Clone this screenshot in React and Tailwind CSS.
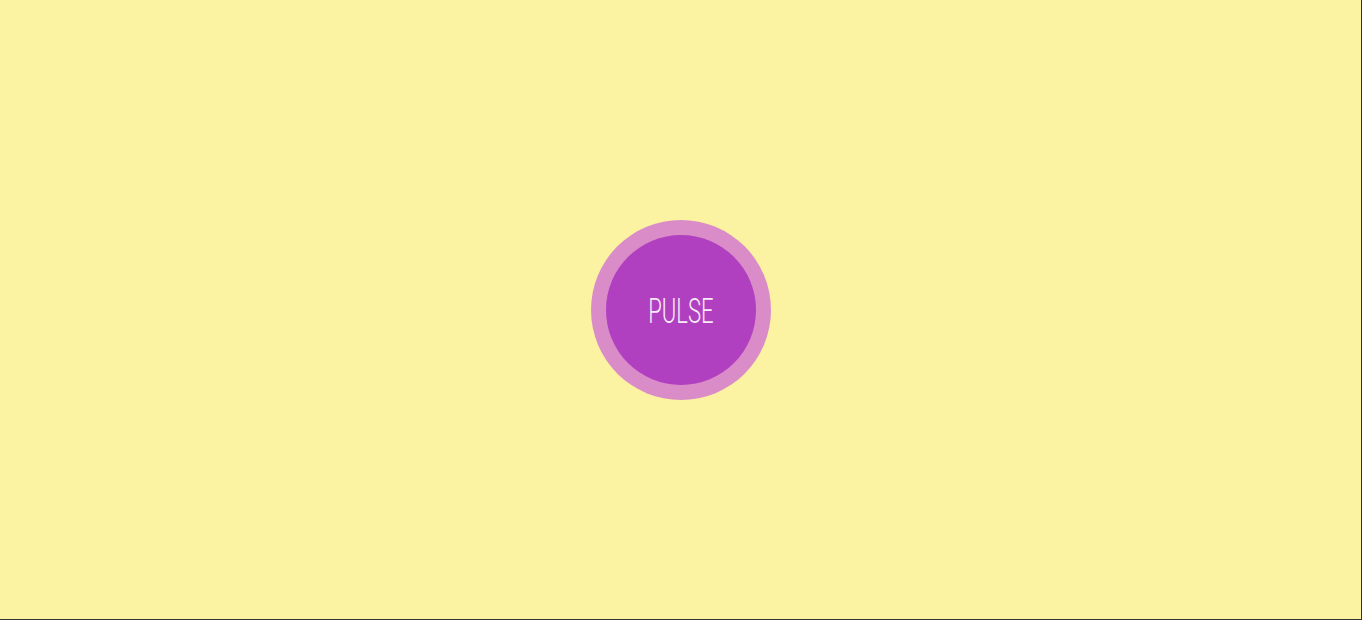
export default function App() {
  return (
    <main className="flex h-[620px] w-full items-center justify-center border-r border-b border-[#333] bg-[#fbf3a1]">
      <div className="flex h-[180px] w-[180px] items-center justify-center rounded-full bg-[#da8cc8]">
        <div className="flex h-[150px] w-[150px] items-center justify-center rounded-full bg-[#b040c0]">
          <span className="mt-[4px] inline-block scale-x-[0.63] font-['Roboto',sans-serif] text-[35px] font-light leading-none tracking-normal text-[#f7ecf7]">
            PULSE
          </span>
        </div>
      </div>
    </main>
  );
}
